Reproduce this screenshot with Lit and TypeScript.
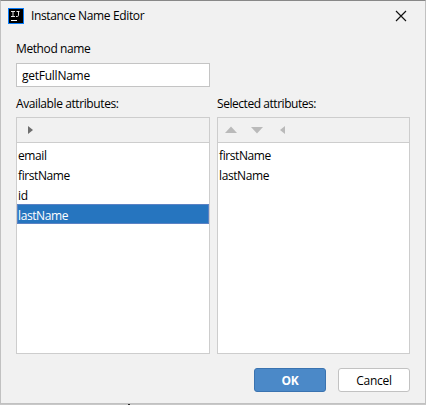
import { LitElement, html, css, svg } from "lit";
import { customElement, property } from "lit/decorators.js";

@customElement("attribute-list")
class AttributeList extends LitElement {
  @property({ type: Array }) items: string[] = [];
  @property() selected = "";

  static styles = css`
    :host { display: flex; flex-direction: column; box-sizing: border-box; height: 237px; border: 1px solid #cdcdcd; background: #fff; }
    .toolbar { box-sizing: border-box; height: 25px; flex: none; background: #f1f1f1; border-bottom: 1px solid #cdcdcd; display: flex; }
    .list { padding-top: 1px; }
    .row { box-sizing: border-box; height: 20px; padding-left: 1px; line-height: 23px; white-space: nowrap; }
    .row.selected { background: #2675bf; color: #fff; box-shadow: inset 0 0 0 1px #5b82c4; }
  `;

  render() {
    return html`
      <div class="toolbar"><slot></slot></div>
      <div class="list">
        ${this.items.map((i) => html`<div class="row ${i === this.selected ? "selected" : ""}">${i}</div>`)}
      </div>
    `;
  }
}

const icon = (points: string, fill: string, width: number) => html`
  <svg width=${width} height="24" viewBox="0 0 ${width} 24">${svg`<polygon points=${points} fill=${fill} />`}</svg>
`;

@customElement("app-root")
class AppRoot extends LitElement {
  static styles = css`
    :host { display: block; height: 405px; background: #c8c8c8; font: 12px/16px "Open Sans", "Noto Sans", sans-serif; color: #000; letter-spacing: -0.4px; }
    svg { display: block; flex: none; }
    .dialog { box-sizing: border-box; height: 404px; border: 1px solid #c1c1c1; border-top-color: #888; background: #f1f1f1; }
    .titlebar { display: flex; align-items: center; height: 29px; padding: 0 18px 0 7px; }
    .title { flex: 1; margin-left: 7px; letter-spacing: -0.36px; }
    .content { padding: 11px 15px 0; }
    .label { height: 16px; white-space: nowrap; }
    .input { box-sizing: border-box; width: 194px; height: 24px; margin: 6px 0 9px; border: 1px solid #c4c4c4; background: #fff; padding-left: 5px; line-height: 24px; letter-spacing: -0.25px; }
    .columns { display: grid; grid-template-columns: 194px 193px; gap: 7px; }
    .columns .label { margin-bottom: 5px; }
    .columns .narrow { letter-spacing: -0.45px; }
    .actions { display: flex; justify-content: flex-end; gap: 12px; margin-top: 14px; }
    .button { box-sizing: border-box; width: 72px; height: 24px; border: 1px solid #c2c2c2; border-radius: 3px; background: #fff; text-align: center; line-height: 24px; letter-spacing: -0.25px; }
    .button.primary { background: #4b89c8; border-color: #3a73b0; color: #fff; font-weight: 700; }
    .edge { width: 2px; height: 1px; margin-left: 128px; background: #2b2b2b; }
  `;

  render() {
    return html`
      <div class="dialog">
        <div class="titlebar">
          <svg width="16" height="16" viewBox="0 0 16 16">
            <rect width="16" height="16" fill="#087cfa" />
            <rect x="1" y="1" width="14" height="14" fill="#000" />
            <path d="M3 3.5h4M3 8.5h4M5 3v6M8.5 3.5h3M10.5 3v4.3q0 1.2-1.2 1.2H8" fill="none" stroke="#e8e8e8" />
            <path d="M3 12.5h6" stroke="#fff" />
          </svg>
          <div class="title">Instance Name Editor</div>
          <svg width="12" height="12" viewBox="0 0 12 12">
            <path d="M1 1l10 10M11 1L1 11" stroke="#111" stroke-width="1.15" />
          </svg>
        </div>
        <div class="content">
          <div class="label">Method name</div>
          <div class="input">getFullName</div>
          <div class="columns">
            <div>
              <div class="label">Available attributes:</div>
              <attribute-list .items=${["email", "firstName", "id", "lastName"]} selected="lastName">
                ${icon("11,8 11,16 16,12", "#6e6e6e", 24)}
              </attribute-list>
            </div>
            <div>
              <div class="label narrow">Selected attributes:</div>
              <attribute-list .items=${["firstName", "lastName"]}>
                ${icon("7,15 19,15 13,8.5", "#bababa", 26)}
                ${icon("7,9 19,9 13,15.5", "#bababa", 26)}
                ${icon("15,8 15,16 10,12", "#bababa", 26)}
              </attribute-list>
            </div>
          </div>
          <div class="actions">
            <div class="button primary">OK</div>
            <div class="button">Cancel</div>
          </div>
        </div>
      </div>
      <div class="edge"></div>
    `;
  }
}
